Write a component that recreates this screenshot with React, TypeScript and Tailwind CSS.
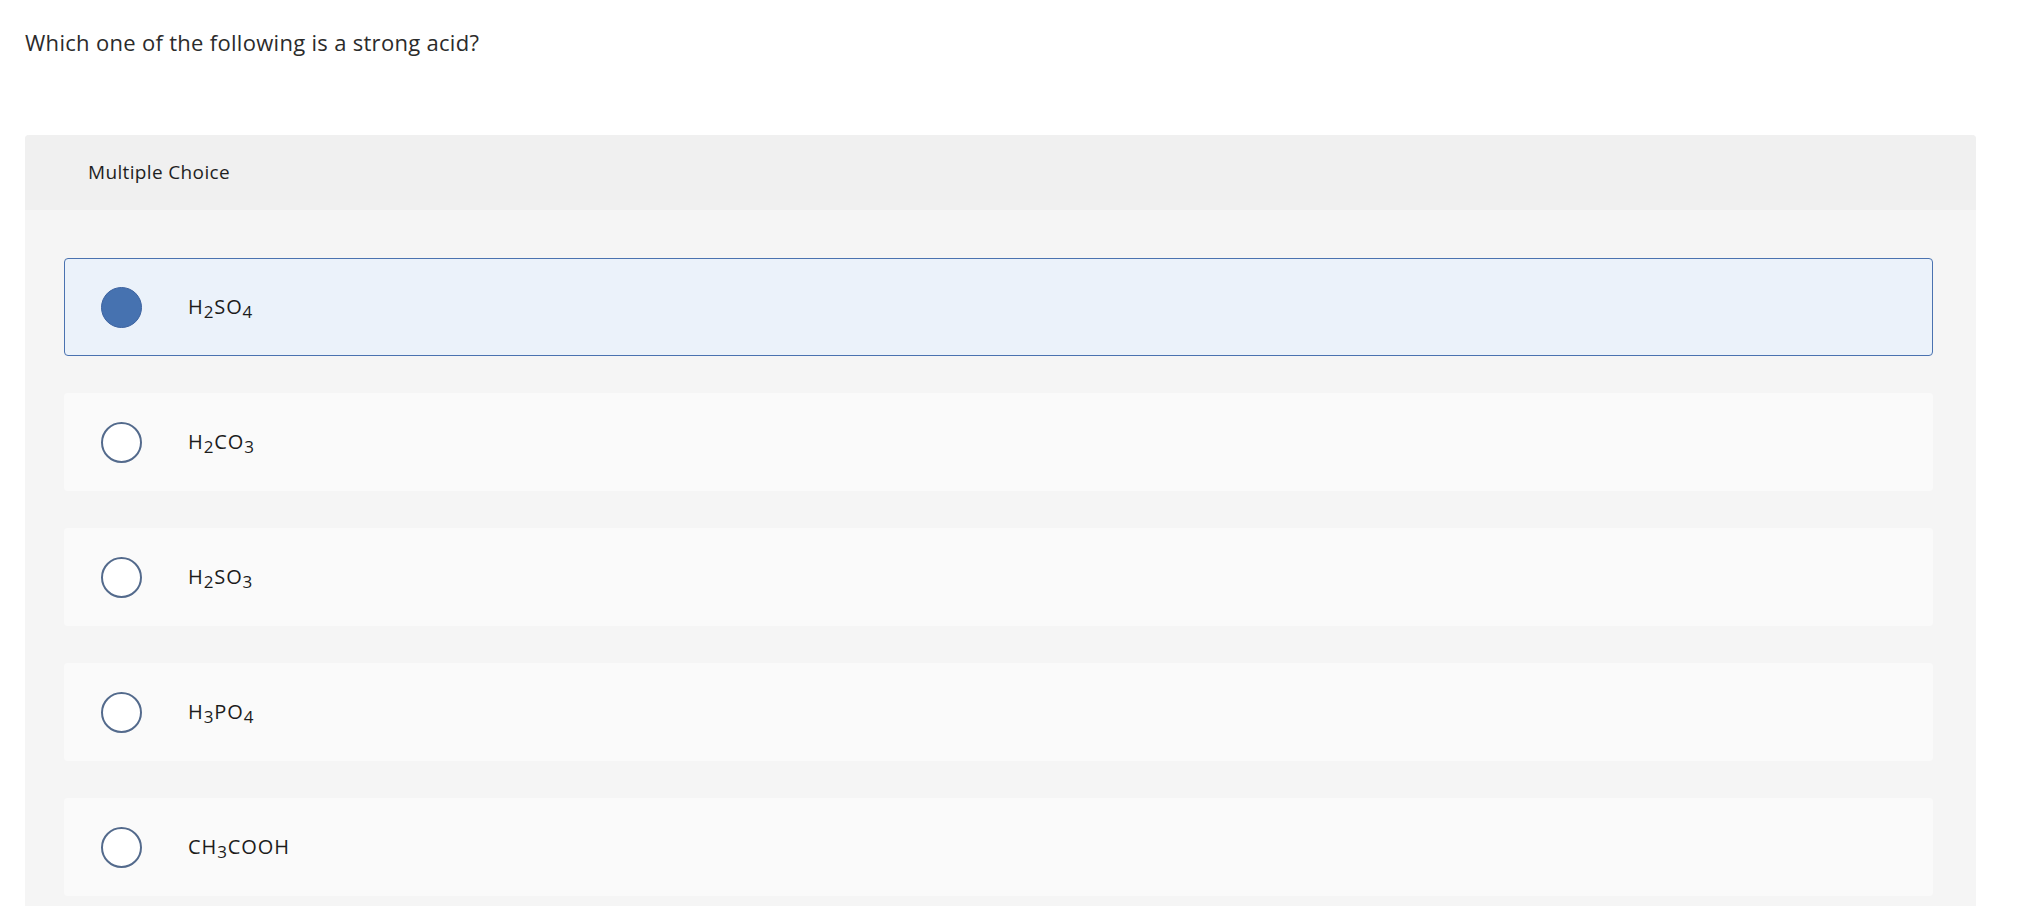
const CHOICES = [
  { id: 'a', parts: [['H', ''], ['2', 'sub'], ['SO', ''], ['4', 'sub']] },
  { id: 'b', parts: [['H', ''], ['2', 'sub'], ['CO', ''], ['3', 'sub']] },
  { id: 'c', parts: [['H', ''], ['2', 'sub'], ['SO', ''], ['3', 'sub']] },
  { id: 'd', parts: [['H', ''], ['3', 'sub'], ['PO', ''], ['4', 'sub']] },
  { id: 'e', parts: [['CH', ''], ['3', 'sub'], ['COOH', '']] },
]

const selected = 'a'

function Formula({ parts }: { parts: string[][] }) {
  return (
    <span>
      {parts.map(([t, kind], i) =>
        kind === 'sub' ? <sub key={i} className="text-[85%]">{t}</sub> : <span key={i}>{t}</span>
      )}
    </span>
  )
}

export default function App() {
  return (
    <div className="min-h-screen bg-white text-[#222] font-['Open_Sans','Liberation_Sans',sans-serif]">
      {/* Question */}
      <div className="px-[25px] pt-[28px] h-[135px]">
        <p className="text-[22px] leading-[28px] tracking-[0.3px] text-[#2b2b2b]">Which one of the following is a strong acid?</p>
      </div>

      {/* Answer panel */}
      <div className="ml-[25px] w-[1951px] rounded-t-[4px] bg-[#f5f5f5] pb-10">
        <div className="h-[75px] bg-[#f0f0f0] rounded-t-[4px] flex items-center pl-[63px]">
          <span className="text-[19px] tracking-[0.35px] text-[#1f1f1f]">Multiple Choice</span>
        </div>

        <div className="pt-[48px] pl-[39px] pr-[43px] flex flex-col gap-[37px]">
          {CHOICES.map(c => {
            const on = c.id === selected
            return (
              <div
                key={c.id}
                className={
                  on
                    ? 'h-[98px] rounded-[4px] border border-[#4a72b0] bg-[#ebf2fa] flex items-center pl-[36px]'
                    : 'h-[98px] rounded-[4px] border border-transparent bg-[#fafafa] flex items-center pl-[36px]'
                }
              >
                <span
                  className={
                    on
                      ? 'w-[41px] h-[41px] rounded-full border-[1.5px] border-[#3d63a0] bg-[#4672b0] shrink-0'
                      : 'w-[41px] h-[41px] rounded-full border-2 border-[#536a8c] bg-white shrink-0'
                  }
                />
                <span className="ml-[46px] text-[20px] tracking-[0.9px] text-[#1c1c1c]">
                  <Formula parts={c.parts} />
                </span>
              </div>
            )
          })}
        </div>
      </div>
    </div>
  )
}
